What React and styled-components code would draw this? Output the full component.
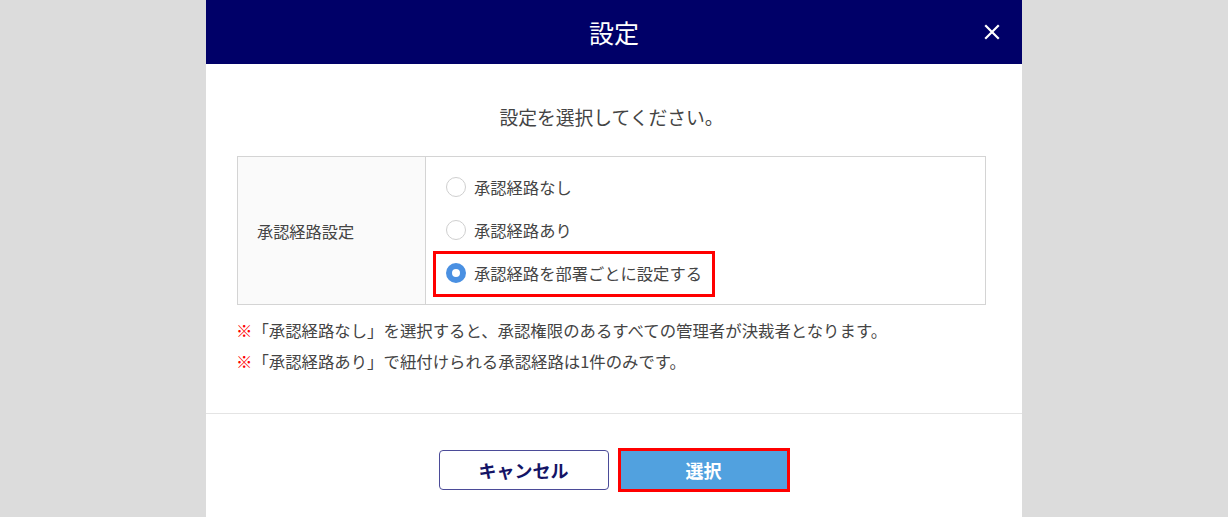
import React, { useState } from 'react';
import styled, { createGlobalStyle } from 'styled-components';

const GlobalStyle = createGlobalStyle`
  html, body {
    margin: 0;
    padding: 0;
    background: #dcdcdc;
    font-family: "Noto Sans CJK JP", "Noto Sans", sans-serif;
    color: #444;
  }
`;

const Page = styled.div`
  display: flex;
  justify-content: center;
  height: 517px;
  overflow: hidden;
`;

const Modal = styled.div`
  width: 816px;
  background: #fff;
  display: flex;
  flex-direction: column;
`;

const Header = styled.div`
  position: relative;
  height: 64px;
  background: #000068;
  display: flex;
  align-items: center;
  justify-content: center;
  color: #fff;
  font-size: 25px;
`;

const CloseButton = styled.button`
  position: absolute;
  right: 19px;
  top: 21px;
  width: 22px;
  height: 22px;
  padding: 0;
  border: 0;
  background: transparent;
  cursor: pointer;
  display: flex;
  align-items: center;
  justify-content: center;
`;

const Body = styled.div`
  padding: 40px 36px 0 31px;
  display: flex;
  flex-direction: column;
`;

const Lead = styled.p`
  margin: 0 0 26px;
  text-align: center;
  font-size: 18.8px;
  line-height: 26px;
  color: #444;
`;

const Table = styled.div`
  display: grid;
  grid-template-columns: 188px 1fr;
  border: 1px solid #d4d4d4;
  box-sizing: border-box;
  height: 149px;
`;

const LabelCell = styled.div`
  background: #fafafa;
  border-right: 1px solid #d4d4d4;
  display: flex;
  align-items: center;
  padding-left: 19px;
  font-size: 16.2px;
  color: #444;
`;

const OptionsCell = styled.div`
  display: flex;
  flex-direction: column;
  align-items: flex-start;
  padding: 8px 0 0 7px;
`;

const Option = styled.label`
  height: 43px;
  display: inline-flex;
  align-items: center;
  gap: 8px;
  padding: 0 13px;
  font-size: 16.3px;
  color: #444;
  cursor: pointer;
  box-sizing: border-box;
  ${(p) => p.$highlight && `
    outline: 3px solid #f00;
    outline-offset: -3px;
    height: 46px;
    padding-bottom: 3px;
  `}
`;

const Radio = styled.span`
  width: 20px;
  height: 20px;
  border-radius: 50%;
  box-sizing: border-box;
  flex-shrink: 0;
  border: ${(p) => (p.$checked ? '6px solid #4a90e2' : '1.5px solid #cfcfcf')};
  background: #fff;
`;

const Notes = styled.div`
  margin-top: 13px;
  display: flex;
  flex-direction: column;
  gap: 7px;
`;

const Note = styled.p`
  margin: 0 0 0 -1px;
  font-size: 16.4px;
  line-height: 24px;
  color: #444;
`;

const Mark = styled.span`
  color: #f00;
  font-weight: 700;
`;

const Divider = styled.hr`
  width: 100%;
  margin: 40px 0 0;
  border: 0;
  border-top: 1px solid #e4e4e4;
`;

const Footer = styled.div`
  display: flex;
  justify-content: center;
  align-items: center;
  gap: 9px;
  padding-top: 34px;
`;

const Button = styled.button`
  box-sizing: border-box;
  font-family: inherit;
  font-size: 18px;
  font-weight: 700;
  cursor: pointer;
  width: ${(p) => (p.$primary ? '172px' : '170px')};
  height: ${(p) => (p.$primary ? '44px' : '40px')};
  border-radius: ${(p) => (p.$primary ? '0' : '4px')};
  border: ${(p) => (p.$primary ? '3px solid #f00' : '1px solid #4b4b98')};
  background: ${(p) => (p.$primary ? '#51a1df' : '#fff')};
  color: ${(p) => (p.$primary ? '#fff' : '#141466')};
`;

const options = ['承認経路なし', '承認経路あり', '承認経路を部署ごとに設定する'];

export default function App() {
  const [selected, setSelected] = useState(2);

  return (
    <>
      <GlobalStyle />
      <Page>
        <Modal>
          <Header>
            設定
            <CloseButton aria-label="閉じる">
              <svg width="16" height="16" viewBox="0 0 16 16">
                <path d="M2 2L14 14M14 2L2 14" stroke="#fff" strokeWidth="2.2" strokeLinecap="square" />
              </svg>
            </CloseButton>
          </Header>
          <Body>
            <Lead>設定を選択してください。</Lead>
            <Table>
              <LabelCell>承認経路設定</LabelCell>
              <OptionsCell>
                {options.map((o, i) => (
                  <Option key={o} $highlight={i === 2} onClick={() => setSelected(i)}>
                    <Radio $checked={selected === i} />
                    {o}
                  </Option>
                ))}
              </OptionsCell>
            </Table>
            <Notes>
              <Note><Mark>※</Mark>「承認経路なし」を選択すると、承認権限のあるすべての管理者が決裁者となります。</Note>
              <Note><Mark>※</Mark>「承認経路あり」で紐付けられる承認経路は1件のみです。</Note>
            </Notes>
          </Body>
          <Divider />
          <Footer>
            <Button>キャンセル</Button>
            <Button $primary>選択</Button>
          </Footer>
        </Modal>
      </Page>
    </>
  );
}
